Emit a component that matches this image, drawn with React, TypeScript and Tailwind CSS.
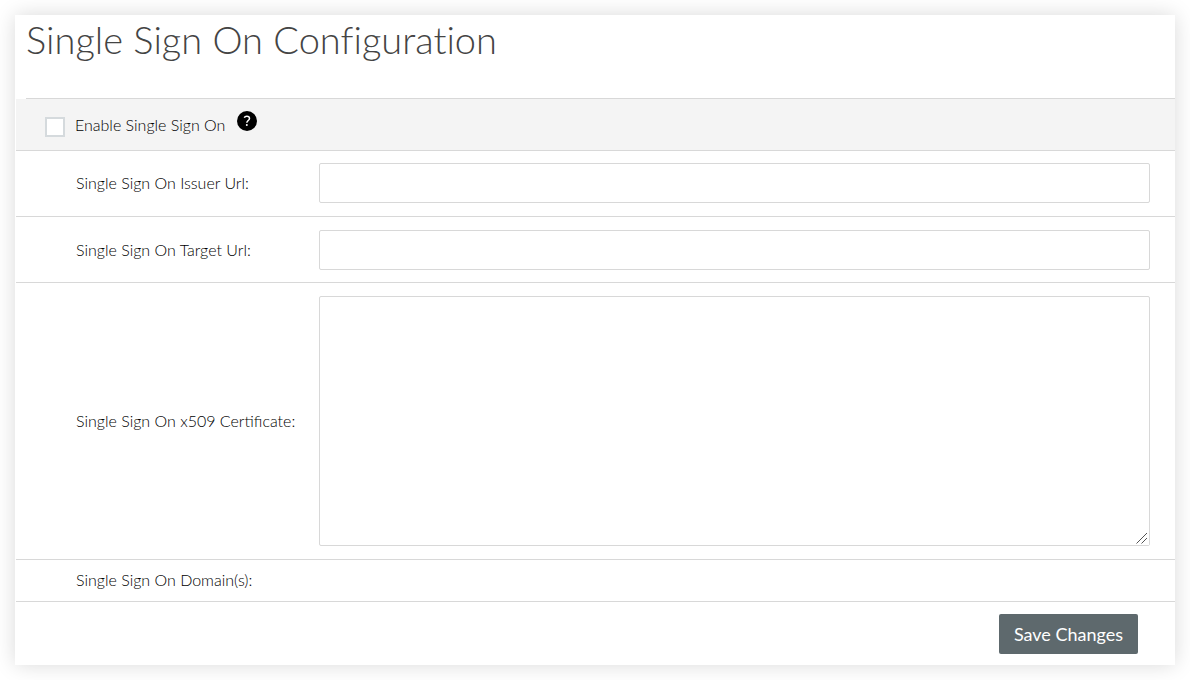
import React from "react";

const fieldClass =
  "block w-full rounded-xs border border-[#d8d8d8] bg-white px-3 text-base outline-none focus:border-[#5e696d]";

function Row({
  id,
  label,
  className,
  children,
}: {
  id: string;
  label: string;
  className: string;
  children?: React.ReactNode;
}) {
  return (
    <div
      className={`ml-px flex items-center border-b border-[#d8d8d8] pr-[25px] pl-[60px] ${className}`}
    >
      <label htmlFor={id} className="w-[243px] shrink-0 leading-6">
        {label}
      </label>
      <div className="relative min-w-0 flex-1">{children}</div>
    </div>
  );
}

export default function App() {
  return (
    <main className="p-[15px] font-['Lato',sans-serif] text-base font-light text-black">
      <form
        className="bg-white shadow-[0_0_20px_rgba(0,0,0,0.15)]"
        onSubmit={(event) => event.preventDefault()}
      >
        <h1 className="ml-[11px] h-[84px] border-b border-[#d8d8d8] text-[38px] leading-[48px] font-light text-[#444444] [font-variant-ligatures:none]">
          Single Sign On Configuration
        </h1>

        <div className="ml-px flex h-[52px] items-center border-b border-[#d8d8d8] bg-[#f4f4f4] pl-[29px]">
          <input
            id="sso-enabled"
            type="checkbox"
            className="mt-1 size-5 appearance-none border-2 border-[#d5dadd] bg-white checked:bg-[#5e696d]"
          />
          <label htmlFor="sso-enabled" className="ml-[10px] leading-6">
            Enable Single Sign On
          </label>
          <button
            type="button"
            aria-label="Help"
            className="mb-2 ml-3 flex size-5 items-center justify-center rounded-full bg-black"
          >
            <svg viewBox="0 0 20 20" className="size-5" fill="none" aria-hidden="true">
              <path
                d="M7.300 6.800C7.700 5.700 8.600 5.200 9.800 5.200c1.700 0 2.700.9 2.700 2.200 0 2-2.700 2.200-2.700 4.400"
                stroke="white"
                strokeWidth="1.5"
              />
              <circle cx="9.800" cy="14" r="1" fill="white" />
            </svg>
          </button>
        </div>

        <Row id="issuer-url" label="Single Sign On Issuer Url:" className="pt-3 pb-[13px]">
          <input id="issuer-url" type="text" className={`h-10 ${fieldClass}`} />
        </Row>
        <Row id="target-url" label="Single Sign On Target Url:" className="pt-[13px] pb-3">
          <input id="target-url" type="text" className={`h-10 ${fieldClass}`} />
        </Row>
        <Row id="certificate" label="Single Sign On x509 Certificate:" className="py-[13px]">
          <textarea
            id="certificate"
            className={`h-[250px] resize-y py-2 [&::-webkit-resizer]:bg-white ${fieldClass}`}
          />
          <svg
            viewBox="0 0 12 12"
            className="pointer-events-none absolute right-[2px] bottom-[2px] size-3"
            stroke="#555555"
            aria-hidden="true"
          >
            <path d="M.5 11.500 11 1M5.500 11.500 11 6" />
          </svg>
        </Row>
        <div className="ml-px border-b border-[#d8d8d8] pt-2 pb-[9px] pl-[60px] leading-6">
          Single Sign On Domain(s):
        </div>

        <div className="flex justify-end pt-3 pr-[37px] pb-[11px]">
          <button
            type="submit"
            className="h-10 rounded-xs bg-[#5e696d] px-[15px] text-lg font-normal text-white"
          >
            Save Changes
          </button>
        </div>
      </form>
    </main>
  );
}
